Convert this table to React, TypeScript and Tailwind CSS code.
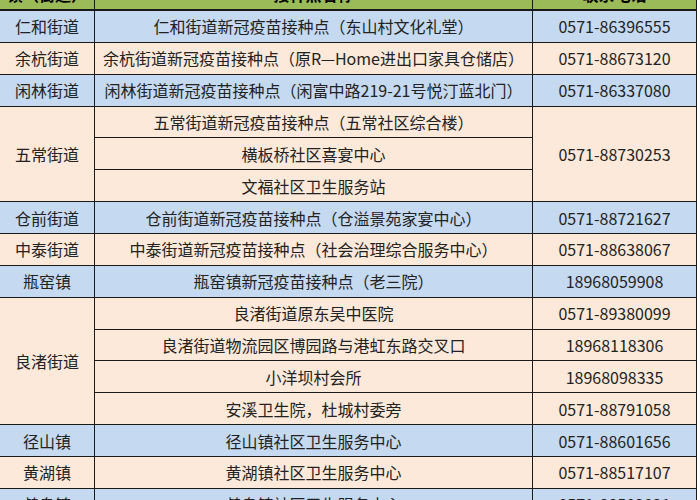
const BLUE = "bg-[#c5d9f1]";
const PEACH = "bg-[#fde9d9]";

type Row = {
  town: string;
  color: string;
  sites: { name: string; phone?: string }[];
  phone?: string; // merged phone for all sites
};

const rows: Row[] = [
  { town: "仁和街道", color: BLUE, sites: [{ name: "仁和街道新冠疫苗接种点（东山村文化礼堂）", phone: "0571-86396555" }] },
  { town: "余杭街道", color: PEACH, sites: [{ name: "余杭街道新冠疫苗接种点（原R—Home进出口家具仓储店）", phone: "0571-88673120" }] },
  { town: "闲林街道", color: BLUE, sites: [{ name: "闲林街道新冠疫苗接种点（闲富中路219-21号悦汀蓝北门）", phone: "0571-86337080" }] },
  {
    town: "五常街道",
    color: PEACH,
    phone: "0571-88730253",
    sites: [{ name: "五常街道新冠疫苗接种点（五常社区综合楼）" }, { name: "横板桥社区喜宴中心" }, { name: "文福社区卫生服务站" }],
  },
  { town: "仓前街道", color: BLUE, sites: [{ name: "仓前街道新冠疫苗接种点（仓溢景苑家宴中心）", phone: "0571-88721627" }] },
  { town: "中泰街道", color: PEACH, sites: [{ name: "中泰街道新冠疫苗接种点（社会治理综合服务中心）", phone: "0571-88638067" }] },
  { town: "瓶窑镇", color: BLUE, sites: [{ name: "瓶窑镇新冠疫苗接种点（老三院）", phone: "18968059908" }] },
  {
    town: "良渚街道",
    color: PEACH,
    sites: [
      { name: "良渚街道原东吴中医院", phone: "0571-89380099" },
      { name: "良渚街道物流园区博园路与港虹东路交叉口", phone: "18968118306" },
      { name: "小洋坝村会所", phone: "18968098335" },
      { name: "安溪卫生院，杜城村委旁", phone: "0571-88791058" },
    ],
  },
  { town: "径山镇", color: BLUE, sites: [{ name: "径山镇社区卫生服务中心", phone: "0571-88601656" }] },
  { town: "黄湖镇", color: PEACH, sites: [{ name: "黄湖镇社区卫生服务中心", phone: "0571-88517107" }] },
  { town: "鸬鸟镇", color: BLUE, sites: [{ name: "鸬鸟镇社区卫生服务中心", phone: "0571-88502021" }] },
];

const spanClass: Record<number, string> = {
  1: "row-span-1",
  3: "row-span-3",
  4: "row-span-4",
};

const cell = "flex items-center justify-center border-r border-b border-[#1a1a1a] whitespace-nowrap overflow-hidden";

export default function App() {
  return (
    <div
      className="w-[700px] h-[500px] overflow-hidden bg-white text-[16px] leading-none text-[#222]"
      style={{ fontFamily: '"Noto Sans CJK SC", "Noto Sans", sans-serif' }}
    >
      <div className="-mt-[21px] grid w-[697px] grid-cols-[95px_438px_164px] grid-rows-[32px] auto-rows-[31.87px]">
        {/* header */}
        <div className={`${cell} bg-[#9bbb59] border-b-2 font-bold text-black`}>镇（街道）</div>
        <div className={`${cell} bg-[#9bbb59] border-b-2 font-bold text-black`}>接种点名称</div>
        <div className={`${cell} bg-[#9bbb59] border-b-2 font-bold text-black`}>联系电话</div>

        {rows.map((r) => {
          const n = r.sites.length;
          return r.sites.map((s, i) => (
            <>
              {i === 0 && <div className={`${cell} ${r.color} ${spanClass[n]} col-start-1`}>{r.town}</div>}
              <div className={`${cell} ${r.color} col-start-2`}>{s.name}</div>
              {r.phone ? (
                i === 0 && <div className={`${cell} ${r.color} ${spanClass[n]} col-start-3`}>{r.phone}</div>
              ) : (
                <div className={`${cell} ${r.color} col-start-3`}>{s.phone}</div>
              )}
            </>
          ));
        })}
      </div>
    </div>
  );
}
